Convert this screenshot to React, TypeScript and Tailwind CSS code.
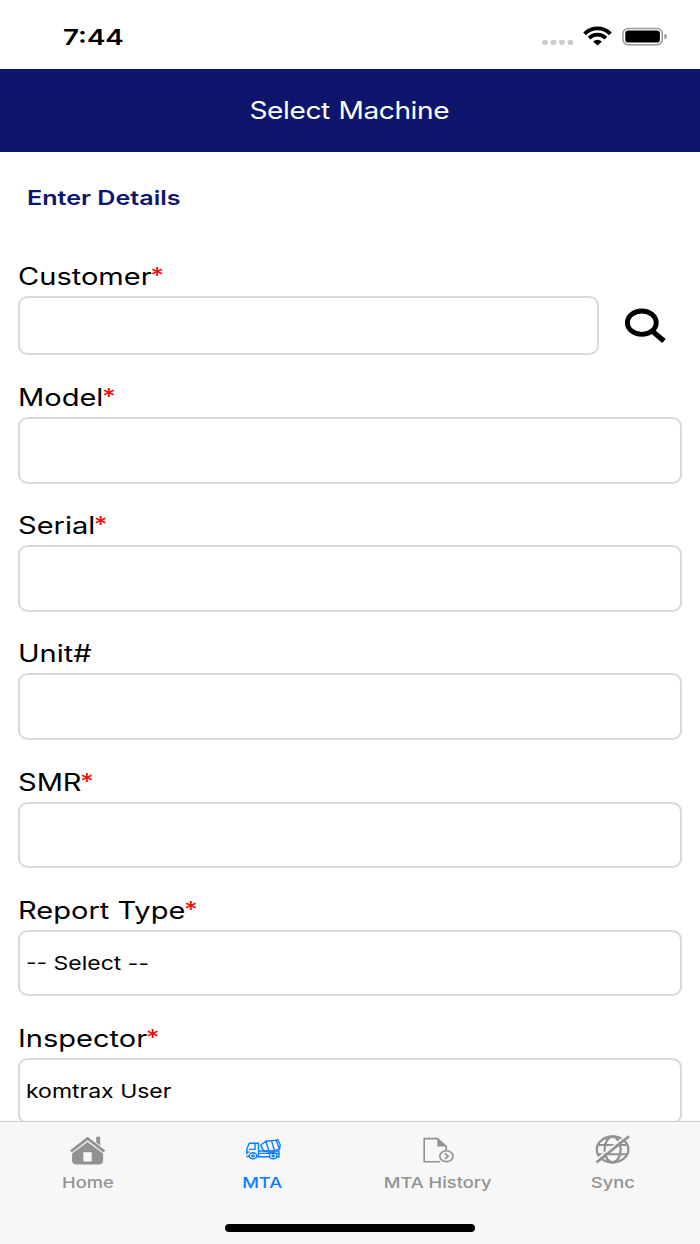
import React, { useState } from "react";

type FieldProps = {
  label: string;
  required?: boolean;
  initial?: string;
};

const StatusBar = () => (
  <div className="flex h-[69px] shrink-0 justify-between">
    <span className="ml-[63px] mt-[20px] h-[34px] origin-left scale-x-[1.26] text-[22px] font-semibold leading-[34px]">
      7:44
    </span>
    <div className="mr-[32px] mt-[24px] flex">
      <svg className="h-[26px] w-[126px]" viewBox="0 0 126 26">
        <g fill="#cbcbcb">
          <rect x="0" y="16" width="6" height="5" rx="2.4" />
          <rect x="8.6" y="16" width="6" height="5" rx="2.4" />
          <rect x="17" y="16" width="6" height="5" rx="2.4" />
          <rect x="25.4" y="16" width="6" height="5" rx="2.4" />
        </g>
        <g fill="none" stroke="#000" strokeWidth="3.8">
          <path d="M42.6 9.8C49.8 2.6 61.2 2.6 68.4 9.8" />
          <path d="M47.1 14.1C51.9 9.5 59.1 9.5 63.9 14.1" />
        </g>
        <path d="M55.5 21.6L51.1 17.6Q55.5 14 59.9 17.6Z" />
        <rect x="80.9" y="4.4" width="39.4" height="16.4" rx="5.6" fill="none" stroke="#999" strokeWidth="1.5" />
        <rect x="83.3" y="6.6" width="34.6" height="12" rx="3.2" />
        <path d="M122.4 9.8Q125 10.6 125 12.6T122.4 15.4Z" fill="#999" />
      </svg>
    </div>
  </div>
);

const Label = ({ label, required }: FieldProps) => (
  <label className="mb-1 ml-[18.2px] flex h-[30px] w-max origin-left scale-x-[1.21] text-[24px] leading-[30px]">
    {label}
    {required && <span className="-ml-px text-[22px] leading-[26px] text-[#ff0000]">*</span>}
  </label>
);

const Field = ({ label, required, initial = "" }: FieldProps) => {
  const [value] = useState(initial);
  return (
    <div className="mb-[27.7px] shrink-0">
      <Label label={label} required={required} />
      <div className="mx-[18px] flex h-[66.5px] items-center rounded-[10px/9px] border-2 border-[#d9d9d9] pl-[5.5px] pt-[2px]">
        <span className="origin-left scale-x-[1.21] text-[19px] leading-[24px]">{value}</span>
      </div>
    </div>
  );
};

const HomeIcon = () => (
  <svg className="h-[36px] w-[44px]" viewBox="0 0 44 36" fill="#929292">
    <path d="M21.6 2.8L39.3 16.5L37.2 18.2L21.6 6.3L6 18.2L3.9 16.5Z" />
    <path d="M30.2 3Q32.2 1.8 34.2 3V11.6L30.2 8.4Z" />
    <path
      fillRule="evenodd"
      d="M21.6 8L37.1 19.6V26.2Q37.1 30.6 32.8 30.6H10.4Q6.1 30.6 6.1 26.2V19.6ZM17.3 18.2V27.6H25.7V18.2Z"
    />
  </svg>
);

const TruckIcon = () => (
  <svg className="h-[36px] w-[44px]" viewBox="0 0 44 36" fill="none" stroke="#0a7cff" strokeWidth="1.4" strokeLinejoin="round">
    <path d="M5.5 22.5H8M5.8 20.5V15L8.3 9.2H17.5V22.5H16M8 15.4H14V10M17.5 19.4H38V23H35.8M28.5 22.8H15.5M17.5 17H38V19.4M5.8 18H8.5" />
    <path d="M19.6 11.2L24.8 7.2L35 6.1L38.5 15.2L28.5 18.4L22.5 16.5ZM24.8 7.2L28 16.8M30.5 6.6L33.5 16.7M35 6.1L36.8 5.8L39.2 10.8L38.5 15.2" />
    <ellipse cx="12" cy="21.8" rx="3.8" ry="3" />
    <ellipse cx="12" cy="21.8" rx="1.2" ry="0.9" />
    <ellipse cx="32.2" cy="21.8" rx="3.8" ry="3" />
    <ellipse cx="32.2" cy="21.8" rx="1.2" ry="0.9" />
  </svg>
);

const HistoryIcon = () => (
  <svg className="h-[36px] w-[44px]" viewBox="0 0 44 36" fill="none" stroke="#929292" strokeWidth="1.6">
    <path d="M24 27.8H8.2V4.6H21.3L30.2 12.4V17" />
    <path d="M21.3 4.6V12.4H30.2Z" fill="#929292" stroke="none" />
    <ellipse cx="30.4" cy="22.2" rx="6.6" ry="5.4" />
    <path d="M28.8 19.5L32.2 22.2L28.8 24.9" />
  </svg>
);

const SyncIcon = () => (
  <svg className="h-[36px] w-[44px]" viewBox="0 0 44 36" fill="none" stroke="#929292" strokeWidth="2.3">
    <ellipse cx="21.6" cy="15.4" rx="15.8" ry="12.9" />
    <ellipse cx="21.6" cy="15.4" rx="8" ry="12.9" />
    <path d="M7.6 11H35.8M7.6 20.2H35.8" strokeWidth="2" />
    <path d="M3.6 26.8L36.3 0.6" stroke="#f7f7f7" strokeWidth="1.6" />
    <path d="M5.4 28.6L38.1 2.3" strokeWidth="2.6" />
  </svg>
);

const tabs = [
  { name: "Home", icon: <HomeIcon /> },
  { name: "MTA", icon: <TruckIcon /> },
  { name: "MTA History", icon: <HistoryIcon /> },
  { name: "Sync", icon: <SyncIcon /> },
];

export default function App() {
  const [active, setActive] = useState("MTA");

  return (
    <div className="flex h-[1244px] w-[700px] flex-col overflow-hidden bg-white font-['Inter','Liberation_Sans',sans-serif] text-black">
      <StatusBar />
      <header className="flex h-[83px] shrink-0 items-center justify-center bg-[#0d166c]">
        <h1 className="mr-[2px] scale-x-[1.17] text-[24px] leading-[30px] tracking-[-0.35px] text-white [word-spacing:1px]">
          Select Machine
        </h1>
      </header>

      <main className="flex min-h-0 flex-1 flex-col overflow-hidden">
        <h2 className="ml-[27.4px] mt-[31px] h-[30px] w-max shrink-0 origin-left scale-x-[1.255] text-[20px] font-semibold leading-[30px] text-[#0d166c]">
          Enter Details
        </h2>
        <div className="mb-[28px] mt-[49px] shrink-0">
          <Label label="Customer" required />
          <div className="mx-[18px] flex h-[59px]">
            <div className="h-[59px] w-[581px] rounded-[10px/9px] border-2 border-[#d9d9d9]" />
            <button className="ml-[24px] mt-[7px] h-[44px]">
              <svg className="h-[44px] w-[44px]" viewBox="0 0 44 44" fill="none" stroke="#000">
                <ellipse cx="18.8" cy="19.7" rx="14.4" ry="11.7" strokeWidth="4.9" />
                <path d="M28.6 27.6L41 38" strokeWidth="5.2" />
              </svg>
            </button>
          </div>
        </div>
        <Field label="Model" required />
        <Field label="Serial" required />
        <Field label="Unit#" />
        <Field label="SMR" required />
        <Field label="Report Type" required initial="-- Select --" />
        <Field label="Inspector" required initial="komtrax User" />
      </main>

      <nav className="flex h-[123px] shrink-0 flex-col border-t border-[#cdcdcd] bg-[#f7f7f7]">
        <div className="grid grid-cols-4">
          {tabs.map((tab) => (
            <button
              key={tab.name}
              onClick={() => setActive(tab.name)}
              className={
                "flex flex-col items-center pt-[12px] " +
                (active === tab.name ? "text-[#0a7cff]" : "text-[#929292]")
              }
            >
              {tab.icon}
              <span className="mt-[3px] scale-x-[1.235] text-[14.8px] font-medium leading-[20px]">{tab.name}</span>
            </button>
          ))}
        </div>
        <div className="mx-auto mt-[31px] h-[8px] w-[250px] rounded-full bg-black" />
      </nav>
    </div>
  );
}
